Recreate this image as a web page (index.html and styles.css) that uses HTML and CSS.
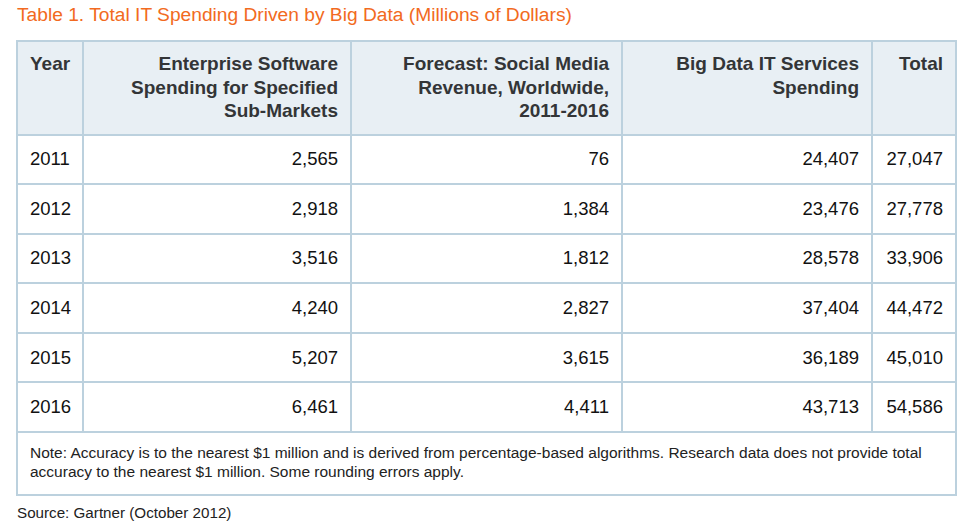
FILE: index.html
```html
<!DOCTYPE html>
<html>
<head>
<meta charset="utf-8">
<link rel="stylesheet" href="styles.css">
</head>
<body>
<div class="page">
  <h1 class="title">Table 1. Total IT Spending Driven by Big Data (Millions of Dollars)</h1>
  <table class="data">
    <colgroup>
      <col class="c-year"><col class="c-ent"><col class="c-fc"><col class="c-bd"><col class="c-tot">
    </colgroup>
    <thead>
      <tr>
        <th class="left">Year</th>
        <th>Enterprise Software Spending for Specified <span class="nw">Sub-Markets</span></th>
        <th>Forecast: Social Media Revenue, Worldwide, <span class="nw">2011-2016</span></th>
        <th>Big Data IT Services Spending</th>
        <th>Total</th>
      </tr>
    </thead>
    <tbody>
      <tr><td class="left">2011</td><td>2,565</td><td>76</td><td>24,407</td><td>27,047</td></tr>
      <tr><td class="left">2012</td><td>2,918</td><td>1,384</td><td>23,476</td><td>27,778</td></tr>
      <tr><td class="left">2013</td><td>3,516</td><td>1,812</td><td>28,578</td><td>33,906</td></tr>
      <tr><td class="left">2014</td><td>4,240</td><td>2,827</td><td>37,404</td><td>44,472</td></tr>
      <tr><td class="left">2015</td><td>5,207</td><td>3,615</td><td>36,189</td><td>45,010</td></tr>
      <tr><td class="left">2016</td><td>6,461</td><td>4,411</td><td>43,713</td><td>54,586</td></tr>
      <tr><td class="note" colspan="5">Note: Accuracy is to the nearest $1 million and is derived from percentage-based algorithms. Research data does not provide total accuracy to the nearest $1 million. Some rounding errors apply.</td></tr>
    </tbody>
  </table>
  <p class="source">Source: Gartner (October 2012)</p>
</div>
</body>
</html>
```

FILE: styles.css
```css
html, body {
  margin: 0;
  padding: 0;
  background: #ffffff;
}
body {
  font-family: "Liberation Sans", Arial, sans-serif;
  color: #111;
}
.page {
  padding: 4px 0 0 16px;
}
.title {
  margin: 0 0 14px 1px;
  font-size: 19.2px;
  font-weight: normal;
  color: #f26a21;
  line-height: 22px;
}
.data {
  border-collapse: collapse;
  table-layout: fixed;
  width: 941px;
}
.c-year { width: 66px; }
.c-ent { width: 268px; }
.c-fc { width: 271px; }
.c-bd { width: 250px; }
.c-tot { width: 84px; }
.data th, .data td {
  border: 2px solid #bcd1de;
  padding: 0 12px;
  text-align: right;
}
.data th {
  background: #e8eff4;
  color: #333537;
  font-size: 19px;
  font-weight: bold;
  line-height: 23.5px;
  vertical-align: top;
  padding-top: 10px;
  padding-bottom: 11px;
}
.nw {
  white-space: nowrap;
}
.data td {
  font-size: 18.5px;
  height: 47.6px;
  vertical-align: middle;
  color: #111;
}
.data .left {
  text-align: left;
}
.data td.note {
  text-align: left;
  font-size: 15.5px;
  line-height: 18.5px;
  height: auto;
  padding: 11px 12px 13px 12px;
  color: #222;
}
.source {
  margin: 8px 0 0 1px;
  font-size: 15.2px;
  color: #222;
}
```
